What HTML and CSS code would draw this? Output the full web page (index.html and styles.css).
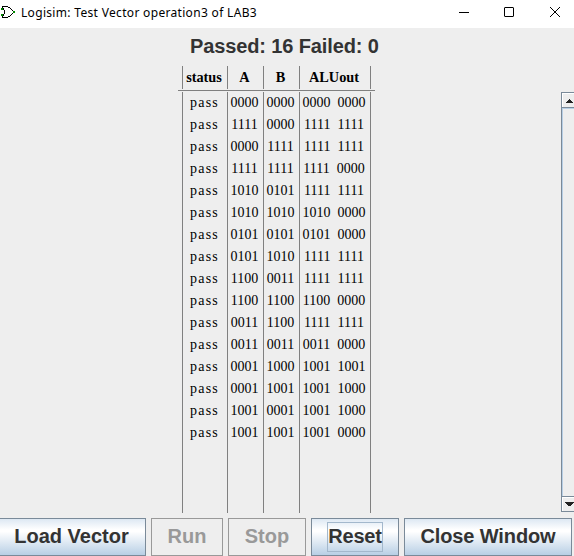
FILE: index.html
```html
<!DOCTYPE html>
<html lang="en">
<head>
<meta charset="utf-8">
<title>Logisim: Test Vector operation3 of LAB3</title>
<link rel="stylesheet" href="styles.css">
</head>
<body>
<header class="titlebar">
  <svg class="logo" width="16" height="14" viewBox="0 0 16 14" fill="none" shape-rendering="crispEdges">
    <path d="M2 1.500h6M2 12.500h6M2.500 1v2M3.500 3v2M4.500 5v4M3.500 9v2M2.500 11v2M8 2.500h2M10 3.500h1M11 4.500h1M12 5.500h1M13 6.500h1M12 8.500h1M11 9.500h1M10 10.500h1M8 11.500h2" stroke="#000"/>
    <path d="M1 3h2v2H1zM1 9h2v2H1zM13 6h2v2h-2z" fill="#080"/>
  </svg>
  <h1 class="title">Logisim: Test Vector operation3 of LAB3</h1>
  <svg class="controls" width="115" height="28" viewBox="0 0 115 28" fill="none" stroke="#000">
    <path d="M0 12.500h10"/>
    <rect x="45.500" y="7.500" width="9" height="9" rx=".5"/>
    <path d="M91 7l10 10M101 7L91 17"/>
  </svg>
</header>
<main class="content">
  <h2 class="summary">Passed: 16 Failed: 0</h2>
  <div class="results">
    <div class="row head"><span>status</span><span>A</span><span>B</span><span>ALUout</span></div>
    <div class="rows" id="rows"></div>
  </div>
  <div class="scrollbar">
    <div class="arrow up"><svg width="9" height="5" viewBox="0 0 9 5" shape-rendering="crispEdges"><path d="M4 0h1v1h1v1h1v1h1v1H1V3h1V2h1V1h1z" fill="#222"/></svg></div>
    <div class="thumb"></div>
    <div class="arrow down"><svg width="9" height="5" viewBox="0 0 9 5" shape-rendering="crispEdges"><path d="M0 0h9v1H8v1H7v1H6v1H3V3H2V2H1V1H0z" fill="#222"/></svg></div>
  </div>
</main>
<footer class="buttons">
  <button class="load">Load Vector</button>
  <button class="run" disabled>Run</button>
  <button class="stop" disabled>Stop</button>
  <button class="reset"><span class="focus">Reset</span></button>
  <button class="close">Close Window</button>
</footer>
<script src="script.js"></script>
</body>
</html>
```
FILE: script.js
```js
const vectors = [
  ["0000", "0000", "0000 0000"],
  ["1111", "0000", "1111 1111"],
  ["0000", "1111", "1111 1111"],
  ["1111", "1111", "1111 0000"],
  ["1010", "0101", "1111 1111"],
  ["1010", "1010", "1010 0000"],
  ["0101", "0101", "0101 0000"],
  ["0101", "1010", "1111 1111"],
  ["1100", "0011", "1111 1111"],
  ["1100", "1100", "1100 0000"],
  ["0011", "1100", "1111 1111"],
  ["0011", "0011", "0011 0000"],
  ["0001", "1000", "1001 1001"],
  ["0001", "1001", "1001 1000"],
  ["1001", "0001", "1001 1000"],
  ["1001", "1001", "1001 0000"]
];
document.getElementById("rows").innerHTML = vectors
  .concat([["", "", ""]])
  .map(([a, b, out]) => {
    const status = a ? "pass" : "";
    return `<div class="row"><span class="status">${status}</span><span>${a}</span><span>${b}</span><span class="out">${out}</span></div>`;
  })
  .join("");
```
FILE: styles.css
```css
* { box-sizing: border-box; }
body {
  margin: 0;
  width: 574px;
  height: 556px;
  overflow: hidden;
  display: flex;
  flex-direction: column;
  background: #eee;
  font-family: "Liberation Sans", sans-serif;
}
.titlebar {
  display: flex;
  height: 28px;
  flex: none;
  background: #fff;
}
.logo { margin-top: 5px; }
.title {
  flex: 1;
  margin: 0 0 0 5px;
  font: 12px/25px "Noto Sans", sans-serif;
  letter-spacing: .32px;
  color: #000;
  white-space: nowrap;
}
.controls { flex: none; }
.content {
  display: grid;
  grid-template: 38px 26px 422px / 178px 197px 186px 13px;
  flex: none;
}
.summary {
  grid-area: 1 / 1 / 2 / 5;
  margin: 0;
  padding-left: 190px;
  font-size: 20px;
  line-height: 37px;
  letter-spacing: -.12px;
  color: #333;
  white-space: nowrap;
}
.results {
  grid-area: 2 / 2 / 4 / 3;
  display: flex;
  flex-direction: column;
  height: 447px;
  font: 14px/22px "Liberation Serif", serif;
  color: #000;
}
.row {
  display: grid;
  grid-template-columns: 45px 36px 36px 72px;
  height: 22px;
  padding-left: 4px;
  text-align: center;
  white-space: pre;
}
.row span {
  border-left: 1px solid #808080;
  padding-right: 2px;
}
.row span:last-child { border-right: 1px solid #808080; }
.head {
  height: 23px;
  margin-bottom: 1px;
  font-weight: bold;
  font-size: 14.300px;
}
.rows {
  flex: 1;
  display: flex;
  flex-direction: column;
  border-top: 1px solid #808080;
  padding-top: 1px;
}
.rows .row:last-child { flex: 1; }
.row .status {
  padding-right: 1px;
  letter-spacing: 1.200px;
}
.out { word-spacing: 3.500px; }
.scrollbar {
  grid-area: 3 / 4;
  display: flex;
  flex-direction: column;
  height: 420px;
  border: 1px solid #7a8a99;
  border-right: 0;
}
.arrow {
  height: 14px;
  padding: 5px 0 0 2px;
  border: solid #fff;
  border-width: 1px 0 0 1px;
  line-height: 0;
}
.down { padding-top: 4px; }
.thumb {
  flex: 1;
  border: 1px solid #7a8a99;
  border-width: 1px 0;
  box-shadow: inset 1px 1px #b8cfe5;
}
.buttons {
  display: grid;
  grid-template-columns: 146px 72px 78px 88px 168px;
  column-gap: 5px;
  height: 38px;
  margin-top: 4px;
}
button {
  padding: 0 0 2px;
  border: 1px solid #7a8a99;
  border-radius: 0;
  background: linear-gradient(#dde8f3 0, #fff 30%, #fff 35%, #b8cfe5 100%);
  font: bold 20px/34px "Liberation Sans", sans-serif;
  color: #333;
  white-space: nowrap;
}
button:disabled {
  border-color: #999;
  background: #eee;
  color: #999;
}
.load {
  border-left: 0;
  padding-right: 2px;
}
.close { letter-spacing: -.12px; }
.reset { padding-bottom: 0; }
.focus {
  display: block;
  width: 56px;
  height: 30px;
  margin: 0 auto;
  border: 1px solid #a3b8cc;
  line-height: 27px;
  letter-spacing: -.2px;
}
```
